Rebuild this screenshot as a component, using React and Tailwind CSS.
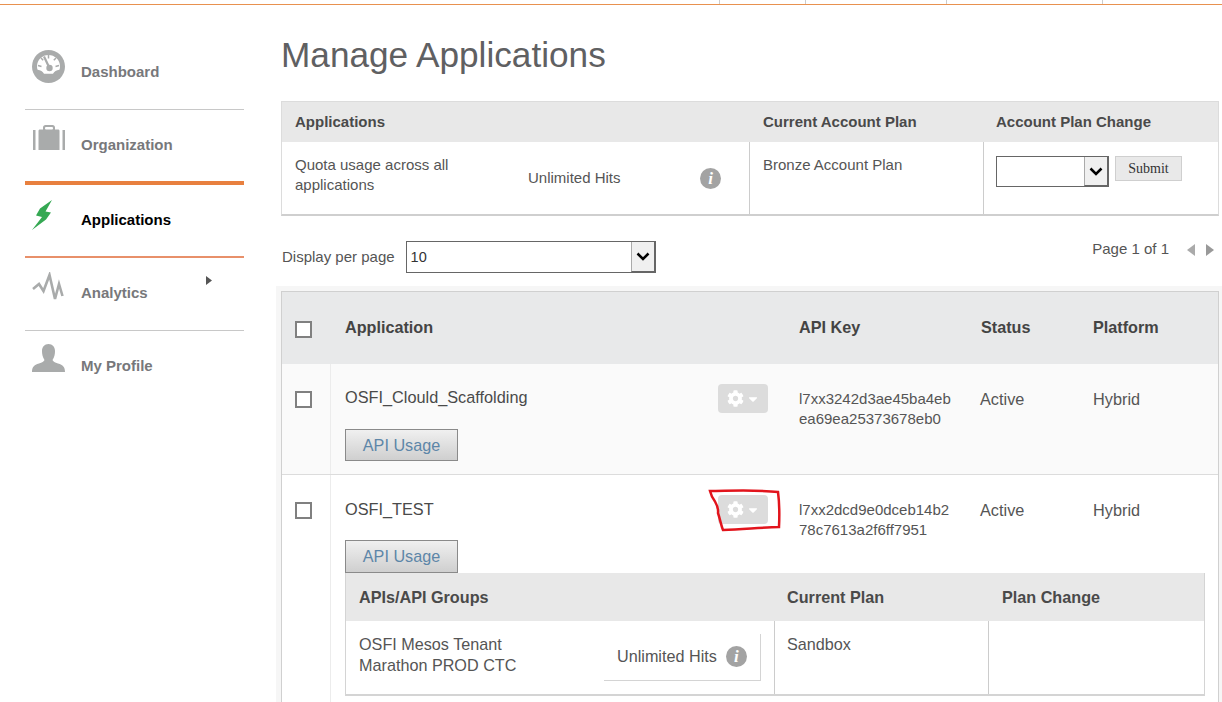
import React from "react";
import { FaCog, FaCaretDown } from "react-icons/fa";

const GaugeIcon = () => (
  <svg width="33" height="33" viewBox="0 0 33 33" className="block">
    <circle cx="16.5" cy="16.5" r="16.5" fill="#a9abab" />
    <path d="M5 16.500a11.500 11.500 0 0 1 23 0c0 1.200-.2 2.200-.6 3.200-3 .4-5.200 1.800-6.400 4h-9c-1.200-2.200-3.400-3.600-6.400-4-.4-1-.6-2-.6-3.200z" fill="#fff" />
    <path d="M12 6.500l5 10.500" stroke="#a9abab" strokeWidth="2.200" />
    <circle cx="17.500" cy="18" r="3.200" fill="#a9abab" />
    <path d="M16.500 5v3.500M9 8l2.200 2.200M24 8l-2.200 2.200M6 15.500l3.500 1M27 15.500l-3.500 1" stroke="#a9abab" strokeWidth="1.500" />
  </svg>
);
const CaseIcon = () => (
  <svg width="33" height="26" viewBox="0 0 33 26" className="block">
    <rect x="0" y="5" width="2.500" height="20" fill="#a9abab" />
    <rect x="29.500" y="5" width="2.500" height="20" fill="#a9abab" />
    <path d="M5.500 25V6c0-1 .5-1.500 1.500-1.500H10V2.500C10 1 11 0 12.500 0h7C21 0 22 1 22 2.500v2h3c1 0 1.500.5 1.500 1.500v19z" fill="#a9abab" />
    <rect x="12" y="2" width="8" height="2.500" rx="1" fill="#fff" />
  </svg>
);
const BoltIcon = () => (
  <svg width="21" height="30" viewBox="0 0 21 30" className="block">
    <path d="M20 0L8 8.500 4 15.500 10 17 0 30 14 19.500 19 12.500 13.500 11.500z" fill="#35a853" />
  </svg>
);
const PulseIcon = () => (
  <svg width="32" height="31" viewBox="0 0 32 31" className="block">
    <path d="M1 17l6-5 4.500 7 6-16 5.500 24 4-15 3.500 12" fill="none" stroke="#a9abab" strokeWidth="2.600" strokeLinejoin="miter" />
  </svg>
);
const PersonIcon = () => (
  <svg width="33" height="28" viewBox="0 0 33 28" className="block">
    <path d="M0 28c0-5 2-7 7-8.500 3-1 5-2 5.500-3.500C10.500 13 10 10 10 7c0-4 2.500-7 6.500-7S23 3 23 7c0 3-.5 6-2.500 9 .5 1.500 2.500 2.500 5.500 3.500 5 1.500 7 3.500 7 8.500z" fill="#a9abab" />
  </svg>
);

const navItems = [
  { label: "Dashboard", icon: <GaugeIcon />, cls: "h-[73px] border-b border-[#c8c8c8]", iconCls: "mt-[13px] ml-[7px]", text: "text-[#77787b]" },
  { label: "Organization", icon: <CaseIcon />, cls: "h-[75px] border-b-4 border-[#e8803f]", iconCls: "mt-[15px] ml-[8px]", text: "text-[#77787b]" },
  { label: "Applications", icon: <BoltIcon />, cls: "h-[73px] border-b-2 border-[#e8906a]", iconCls: "mt-[15px] ml-[7px]", text: "text-black" },
  { label: "Analytics", icon: <PulseIcon />, cls: "h-[73px] border-b border-[#c8c8c8] relative", iconCls: "mt-[14px] ml-[7px]", text: "text-[#77787b]", caret: true },
  { label: "My Profile", icon: <PersonIcon />, cls: "h-[72px]", iconCls: "mt-[13px] ml-[7px]", text: "text-[#77787b]" },
];

const Info = () => (
  <span className="w-[21px] h-[21px] shrink-0 rounded-full bg-[#a3a3a3] flex items-center justify-center text-white text-[17px] font-bold italic leading-none font-['Liberation_Serif',serif]">i</span>
);

const Chevron = () => (
  <svg width="14" height="9" viewBox="0 0 14 9"><path d="M1.500 1.500L7 7l5.500-5.500" fill="none" stroke="#000" strokeWidth="2.500" /></svg>
);

const FakeSelect = ({ cls, value }) => (
  <div className={`${cls} border border-[#666] bg-white flex items-stretch text-[14.500px] text-[#333]`}>
    <span className="flex-1 pl-[4px] leading-[30px]">{value}</span>
    <span className="w-[24px] border-l border-[#aaa] bg-[#f0f0f0] border-r border-b border-r-[#666] border-b-[#666] flex items-center justify-center">
      <Chevron />
    </span>
  </div>
);

const Check = () => <span className="block w-[17px] h-[17px] border-2 border-[#808080] bg-white" />;

const Gear = () => (
  <button className="w-[50px] h-[29px] rounded-[4px] bg-[#dcdcdc] flex items-center pl-[9px] gap-[2px] text-white">
    <FaCog className="w-[17px] h-[17px]" />
    <FaCaretDown className="w-[14px] h-[14px]" />
  </button>
);

const UsageBtn = ({ cls }) => (
  <button className={`block w-[113px] border border-[#8a8a8a] bg-gradient-to-b from-[#f0f0f0] to-[#cfcfcf] text-[#5d86a8] text-[16.200px] leading-[27px] ${cls}`}>API Usage</button>
);

const Row = ({ name, k1, k2, bg, children, gridH, nameCls, btnCls }) => (
  <div className={`flex ${bg}`}>
    <div className="w-[49px] shrink-0 border-r border-[#ececec] pl-[13px] pt-[27px]"><Check /></div>
    <div className="flex-1 min-w-0">
      <div className={`grid grid-cols-[454px_182px_112px_1fr] ${gridH}`}>
        <div className="pl-[14px] pr-[17px] pt-[20px]">
          <div className="flex justify-between">
            <span className={`text-[16.300px] text-[#4a4a4a] ${nameCls}`}>{name}</span>
            <Gear />
          </div>
          <div className="mt-[16px]"><UsageBtn cls={btnCls} /></div>
        </div>
        <div className="pl-[14px] pt-[25px] text-[15px] leading-[20px] text-[#555]">{k1}<br />{k2}</div>
        <div className="pl-[13px] pt-[25px] text-[16.300px] leading-[20px] text-[#555]">Active</div>
        <div className="pl-[14px] pt-[25px] text-[16.300px] leading-[20px] text-[#555]">Hybrid</div>
      </div>
      {children}
    </div>
  </div>
);

export default function App() {
  return (
    <div className="relative w-[1222px] h-[702px] overflow-hidden bg-white font-['Liberation_Sans',Arial,sans-serif]">
      <div className="h-[5px] border-b-[1.500px] border-[#e8914f] flex">
        <span className="ml-[719px] w-[86px] border-l border-[#ccc]" />
        <span className="w-[141px] border-l border-[#ccc]" />
        <span className="w-[156px] border-l border-[#ccc]" />
        <span className="border-l border-[#ccc]" />
      </div>
      <div className="flex">
        <nav className="ml-[25px] w-[219px] mt-[32px] shrink-0">
          {navItems.map((it) => (
            <div key={it.label} className={`flex ${it.cls}`}>
              <div className="w-[56px] shrink-0"><div className={it.iconCls}>{it.icon}</div></div>
              <span className={`pt-[26px] leading-[18px] text-[15px] font-bold ${it.text}`}>{it.label}</span>
              {it.caret && (
                <svg width="6" height="9" viewBox="0 0 6 9" className="absolute left-[181px] top-[18px]"><path d="M0 0l6 4.500L0 9z" fill="#555" /></svg>
              )}
            </div>
          ))}
        </nav>
        <main className="ml-[37px] flex-1 min-w-0">
          <h1 className="pt-[30px] text-[35.200px] leading-[40px] text-[#5f6062] font-normal">Manage Applications</h1>

          <div className="mt-[26px] w-[938px] border border-[#dcdcdc] border-b-2 border-b-[#cfcfcf]">
            <div className="grid grid-cols-[467px_234px_1fr] h-[40px] pt-[1px] bg-[#e8e8e8] items-center text-[15px] font-bold text-[#4a4a4a]">
              <span className="pl-[13px]">Applications</span>
              <span className="pl-[14px]">Current Account Plan</span>
              <span className="pl-[13px]">Account Plan Change</span>
            </div>
            <div className="grid grid-cols-[467px_234px_1fr] h-[72px] text-[15px] text-[#555]">
              <div className="flex items-center pl-[13px]">
                <span className="w-[233px] shrink-0 pr-[60px] leading-[20px] mb-[6px]">Quota usage across all applications</span>
                <span className="w-[172px] shrink-0 leading-[20px]">Unlimited Hits</span>
                <Info />
              </div>
              <div className="border-l border-[#ccc] pl-[13px] pt-[13px] leading-[20px]">Bronze Account Plan</div>
              <div className="border-l border-[#ccc] pl-[12px] pt-[14px] flex items-start gap-[6px]">
                <FakeSelect cls="w-[113px] h-[31px]" value="" />
                <button className="w-[67px] h-[25px] bg-[#e9e9e9] border border-[#cfcfcf] text-[14px] text-[#333] font-['Liberation_Serif',serif]">Submit</button>
              </div>
            </div>
          </div>

          <div className="mt-[25px] w-[938px] flex justify-between">
            <div className="flex items-center gap-[11px]">
              <span className="pl-[1px] text-[15px] text-[#555]">Display per page</span>
              <FakeSelect cls="w-[250px] h-[32px]" value="10" />
            </div>
            <div className="flex items-center gap-[18px] h-[17px] text-[15px] text-[#555] pr-[5px]">
              <span>Page 1 of 1</span>
              <span className="flex gap-[11px]">
                <svg width="8" height="12" viewBox="0 0 8 12"><path d="M8 0v12L0 6z" fill="#aaa" /></svg>
                <svg width="8" height="12" viewBox="0 0 8 12"><path d="M0 0v12l8-6z" fill="#999" /></svg>
              </span>
            </div>
          </div>

          <div className="mt-[13px] -ml-[5px] pl-[5px] pt-[5px] bg-[#f6f6f6]">
            <div className="w-[938px] border-x border-t border-[#d0d0d0] bg-white">
              <div className="flex h-[72px] bg-[#e8e9ea] font-bold text-[16.200px] text-[#444]">
                <div className="w-[49px] pl-[13px] pt-[29px]"><Check /></div>
                <div className="flex-1 grid grid-cols-[454px_182px_112px_1fr] leading-[20px] pt-[25px]">
                  <span className="pl-[14px]">Application</span>
                  <span className="pl-[14px]">API Key</span>
                  <span className="pl-[14px]">Status</span>
                  <span className="pl-[14px]">Platform</span>
                </div>
              </div>
              <div className="border-b border-[#dcdcdc]">
                <Row name="OSFI_Clould_Scaffolding" k1="l7xx3242d3ae45ba4eb" k2="ea69ea25373678eb0" bg="bg-[#fafafa]" gridH="h-[110px]" nameCls="leading-[26px]" btnCls="h-[32px]" />
              </div>
              <Row name="OSFI_TEST" k1="l7xx2dcd9e0dceb14b2" k2="78c7613a2f6ff7951" bg="bg-white" gridH="h-[98px]" nameCls="leading-[29px]" btnCls="h-[33px]">
                <div className="ml-[14px] mb-[20px] w-[860px] border-x border-b-2 border-[#d4d4d4]">
                  <div className="grid grid-cols-[428px_214px_1fr] h-[48px] pt-[1px] bg-[#e8e8e8] items-center text-[16.200px] font-bold text-[#4a4a4a]">
                    <span className="pl-[13px]">APIs/API Groups</span>
                    <span className="pl-[13px]">Current Plan</span>
                    <span className="pl-[14px]">Plan Change</span>
                  </div>
                  <div className="grid grid-cols-[428px_214px_1fr] h-[73px] text-[16.200px] text-[#555]">
                    <div className="flex pl-[13px] pt-[13px] pr-[13px] justify-between">
                      <span className="leading-[21px] w-[180px]">OSFI Mesos Tenant Marathon PROD CTC</span>
                      <div className="w-[157px] h-[47px] pb-[2px] border-r border-b border-[#d4d4d4] flex items-center pl-[13px] gap-[9px]">
                        <span>Unlimited Hits</span>
                        <Info />
                      </div>
                    </div>
                    <div className="border-l border-[#ccc] pl-[12px] pt-[13px] leading-[21px]">Sandbox</div>
                    <div className="border-l border-[#ccc]" />
                  </div>
                </div>
              </Row>
            </div>
          </div>
        </main>
      </div>
      <svg width="76" height="46" viewBox="0 0 76 46" fill="none" className="absolute left-[707px] top-[488px]">
        <path d="M3 3C20 3 50 1.500 71 4c1.500 11 1.500 24 1 35-16 .5-34 2-56 3-2-5-3-11-5-17 .500-4-1-8-3-11.500C6 11 4 7 3 3z" stroke="#e2141c" strokeWidth="2.500" />
      </svg>
    </div>
  );
}
